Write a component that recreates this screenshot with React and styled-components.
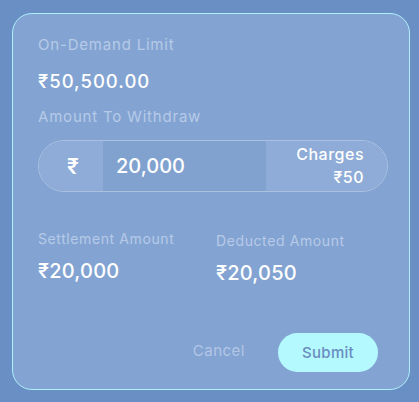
import React from "react";
import styled, { createGlobalStyle } from "styled-components";

const Global = createGlobalStyle`
  html, body { margin: 0; padding: 0; }
  body {
    background: #6a8fc4;
    font-family: "Inter", "Noto Sans", sans-serif;
    width: 419px;
    height: 402px;
    overflow: hidden;
  }
  * { box-sizing: border-box; }
`;

const Card = styled.div`
  margin: 13px 0 0 12px;
  width: 398px;
  height: 377px;
  border: 1.5px solid #aef0fb;
  border-radius: 20px;
  background: #83a4d2;
  padding: 21px 20px 17px 25px;
  display: flex;
  flex-direction: column;
`;

const Label = styled.div`
  font-size: ${(p) => (p.$small ? 14 : 15)}px;
  letter-spacing: ${(p) => (p.$small ? 0.6 : 0.8)}px;
  line-height: 20px;
  font-weight: 400;
  color: #b7cae8;
  margin-top: ${(p) => p.$mt || 0}px;
`;

const Value = styled.div`
  font-size: ${(p) => p.$size || 18}px;
  letter-spacing: ${(p) => p.$ls || 0}px;
  line-height: 26px;
  font-weight: 500;
  color: #ffffff;
  margin-top: ${(p) => p.$mt || 0}px;
`;

const Pill = styled.div`
  margin-top: 13px;
  width: 350px;
  height: 52px;
  border: 1px solid rgba(255, 255, 255, 0.32);
  border-radius: 26px;
  overflow: hidden;
  display: flex;
  align-items: stretch;
`;

const Currency = styled.div`
  width: 64px;
  background: #8eacd7;
  color: #fff;
  font-size: 21px;
  font-weight: 600;
  display: flex;
  align-items: center;
  justify-content: center;
  padding-left: 4px;
`;

const AmountInput = styled.div`
  flex: 1;
  background: #81a2cf;
  color: #fff;
  font-size: 20px;
  font-weight: 500;
  display: flex;
  align-items: center;
  padding-left: 13px;
`;

const Charges = styled.div`
  width: 121px;
  background: #8eacd7;
  color: #fff;
  display: flex;
  flex-direction: column;
  align-items: flex-end;
  justify-content: center;
  padding-right: 23px;
  font-size: 16px;
  font-weight: 500;
  letter-spacing: 0.5px;
  line-height: 23px;
`;

const Summary = styled.div`
  margin-top: 37px;
  display: grid;
  grid-template-columns: 178px 1fr;
`;

const SummaryCol = styled.div`
  margin-top: ${(p) => p.$offset || 0}px;
`;

const Actions = styled.div`
  margin-top: auto;
  display: flex;
  justify-content: flex-end;
  align-items: center;
  gap: 33px;
`;

const CancelBtn = styled.button`
  background: none;
  border: none;
  padding: 0;
  margin-top: -5px;
  font-family: inherit;
  font-size: 15px;
  letter-spacing: 0.5px;
  color: #b3c6e6;
`;

const SubmitBtn = styled.button`
  width: 100px;
  height: 39px;
  border: none;
  border-radius: 20px;
  background: #b4f9fe;
  color: #6a8bc0;
  font-family: inherit;
  font-size: 15px;
  letter-spacing: 0.3px;
  font-weight: 500;
  padding: 0;
  margin-right: 11px;
`;

export default function App() {
  return (
    <>
      <Global />
      <Card>
        <Label>On-Demand Limit</Label>
        <Value $mt={13} $size={18.5} $ls={1}>₹50,500.00</Value>
        <Label $mt={13}>Amount To Withdraw</Label>
        <Pill>
          <Currency>₹</Currency>
          <AmountInput>20,000</AmountInput>
          <Charges>
            <span>Charges</span>
            <span>₹50</span>
          </Charges>
        </Pill>
        <Summary>
          <SummaryCol>
            <Label $small>Settlement Amount</Label>
            <Value $mt={9} $size={20} $ls={0.2}>₹20,000</Value>
          </SummaryCol>
          <SummaryCol $offset={2}>
            <Label $small>Deducted Amount</Label>
            <Value $mt={9} $size={20} $ls={0.2}>₹20,050</Value>
          </SummaryCol>
        </Summary>
        <Actions>
          <CancelBtn>Cancel</CancelBtn>
          <SubmitBtn>Submit</SubmitBtn>
        </Actions>
      </Card>
    </>
  );
}
